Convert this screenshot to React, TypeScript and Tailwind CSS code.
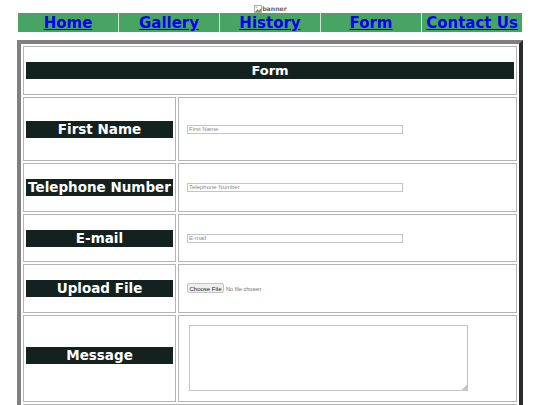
const navItems = ['Home', 'Gallery', 'History', 'Form', 'Contact Us'];

const font = { fontFamily: '"DejaVu Sans", sans-serif' };

function Label({ text, up }: { text: string; up?: boolean }) {
  return (
    <div className={`w-full h-[17px] bg-[#13211f] text-white text-center font-bold text-[13.5px] leading-[17px] whitespace-nowrap ${up ? 'mb-[7px]' : ''}`}>
      {text}
    </div>
  );
}

function Row({ label, height, up, children }: { label: string; height: string; up?: boolean; children: React.ReactNode }) {
  return (
    <div className={`flex gap-[2px] ${height}`}>
      <div className="w-[153px] shrink-0 border border-[#b4b4b4] flex items-center px-[2px]">
        <Label text={label} up={up} />
      </div>
      <div className="flex-1 border border-[#b4b4b4] flex items-center pl-[8px]">{children}</div>
    </div>
  );
}

function TextField({ placeholder }: { placeholder: string }) {
  return (
    <input
      type="text"
      placeholder={placeholder}
      className="w-[212px] h-[7px] box-content border border-[#c4c4c4] px-[1px] text-[6px] leading-[7px] placeholder:text-[#8a8a8a] outline-none"
      style={{ fontFamily: '"Liberation Sans", sans-serif' }}
    />
  );
}

export default function App() {
  return (
    <div className="h-[405px] w-[540px] overflow-hidden bg-white" style={font}>
      <div className="h-[13px] flex items-center justify-center pt-[4px] pl-[1px] text-[6.2px] font-bold text-[#666666]">
        <svg width="8" height="8" viewBox="0 0 8 8">
          <rect x="0.5" y="0.5" width="7" height="7" fill="#fff" stroke="#b0b0b0" />
          <path d="M1 7 L3.5 4 L5 5.5 L7 3 V7 Z" fill="#6aa84f" />
          <rect x="1.5" y="1.5" width="2" height="1.5" fill="#a8c8f8" />
        </svg>
        <span>banner</span>
      </div>

      <nav className="mx-[18px] h-[19px] flex bg-[#48a463] overflow-hidden">
        {navItems.map((item, i) => (
          <a
            key={item}
            href="#"
            className={`flex-1 text-center text-[#0000ee] underline font-bold text-[15px] leading-[21px] whitespace-nowrap ${i > 0 ? 'border-l border-[#cfe5d5]' : ''}`}
          >
            {item}
          </a>
        ))}
      </nav>

      <div className="mt-[8px] ml-[17px] w-[506px] border-[4px] border-t-[#808080] border-l-[#808080] border-r-[#2b2b2b] border-b-[#2b2b2b] px-[2px] pt-[2px] flex flex-col gap-[2px]">
        <div className="h-[49px] border border-[#b4b4b4] flex items-center px-[2px]">
          <div className="w-full h-[17px] bg-[#13211f] text-white text-center font-bold text-[13px] leading-[17px]">
            Form
          </div>
        </div>

        <Row label="First Name" height="h-[64px]">
          <TextField placeholder="First Name" />
        </Row>
        <Row label="Telephone Number" height="h-[49px]">
          <TextField placeholder="Telephone Number" />
        </Row>
        <Row label="E-mail" height="h-[48px]">
          <TextField placeholder="E-mail" />
        </Row>
        <Row label="Upload File" height="h-[49px]">
          <input
            type="file"
            className="text-[5.6px] text-[#707070] file:text-[6px] file:text-[#222222] file:bg-[#efefef] file:border file:border-[#c4c4c4] file:rounded-[2px] file:px-[1.5px] file:py-[1px] file:mr-[2px] file:h-[10px]"
            style={{ fontFamily: '"Liberation Sans", sans-serif' }}
          />
        </Row>
        <Row label="Message" height="h-[87px]" up>
          <textarea className="ml-[2px] mb-[2px] w-[279px] h-[66px] border border-[#c4c4c4] outline-none [&::-webkit-resizer]:bg-[linear-gradient(135deg,transparent_50%,#c8c8c8_50%)] [&::-webkit-resizer]:bg-[length:5px_5px] [&::-webkit-resizer]:bg-no-repeat [&::-webkit-resizer]:bg-right-bottom" />
        </Row>
        <div className="h-[49px] border border-[#b4b4b4]" />
      </div>
    </div>
  );
}
